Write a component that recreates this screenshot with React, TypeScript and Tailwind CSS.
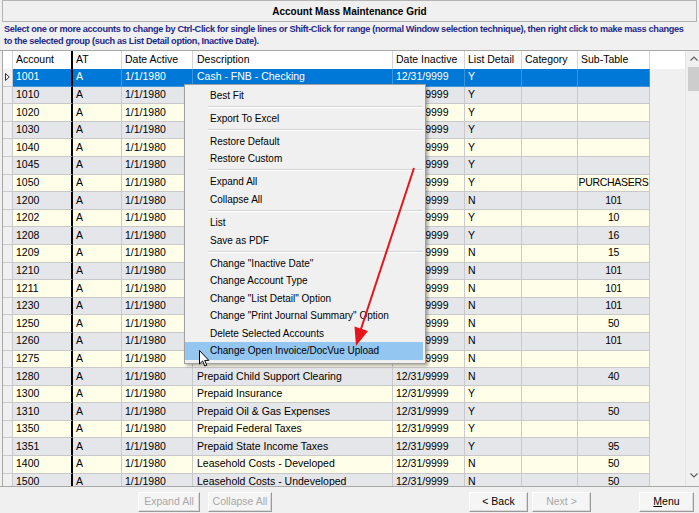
import React from "react";

type Row = [string, string, string, string, string, string, string, string];

const rows: Row[] = [
  ["1001", "A", "1/1/1980", "Cash - FNB - Checking", "12/31/9999", "Y", "", ""],
  ["1010", "A", "1/1/1980", "Cash - Payroll", "12/31/9999", "Y", "", ""],
  ["1020", "A", "1/1/1980", "Cash - Money Market", "12/31/9999", "Y", "", ""],
  ["1030", "A", "1/1/1980", "Petty Cash", "12/31/9999", "Y", "", ""],
  ["1040", "A", "1/1/1980", "Cash - Savings", "12/31/9999", "Y", "", ""],
  ["1045", "A", "1/1/1980", "Cash - Distribution", "12/31/9999", "Y", "", ""],
  ["1050", "A", "1/1/1980", "Accounts Receivable - Trade", "12/31/9999", "Y", "", "PURCHASERS"],
  ["1200", "A", "1/1/1980", "A/R - Joint Interest Billing", "12/31/9999", "N", "", "101"],
  ["1202", "A", "1/1/1980", "A/R - Employees", "12/31/9999", "Y", "", "10"],
  ["1208", "A", "1/1/1980", "A/R - Other", "12/31/9999", "Y", "", "16"],
  ["1209", "A", "1/1/1980", "Notes Receivable", "12/31/9999", "N", "", "15"],
  ["1210", "A", "1/1/1980", "Accrued Interest Receivable", "12/31/9999", "N", "", "101"],
  ["1211", "A", "1/1/1980", "Allowance for Doubtful Accts", "12/31/9999", "N", "", "101"],
  ["1230", "A", "1/1/1980", "Inventory - Equipment", "12/31/9999", "N", "", "101"],
  ["1250", "A", "1/1/1980", "Inventory - Materials", "12/31/9999", "N", "", "50"],
  ["1260", "A", "1/1/1980", "Prepaid Expenses", "12/31/9999", "N", "", "101"],
  ["1275", "A", "1/1/1980", "Prepaid Workers Comp", "12/31/9999", "N", "", ""],
  ["1280", "A", "1/1/1980", "Prepaid Child Support Clearing", "12/31/9999", "N", "", "40"],
  ["1300", "A", "1/1/1980", "Prepaid Insurance", "12/31/9999", "Y", "", ""],
  ["1310", "A", "1/1/1980", "Prepaid Oil & Gas Expenses", "12/31/9999", "Y", "", "50"],
  ["1350", "A", "1/1/1980", "Prepaid Federal Taxes", "12/31/9999", "Y", "", ""],
  ["1351", "A", "1/1/1980", "Prepaid State Income Taxes", "12/31/9999", "Y", "", "95"],
  ["1400", "A", "1/1/1980", "Leasehold Costs - Developed", "12/31/9999", "N", "", "50"],
  ["1500", "A", "1/1/1980", "Leasehold Costs - Undeveloped", "12/31/9999", "N", "", "50"],
];

const headers = ["Account", "AT", "Date Active", "Description", "Date Inactive", "List Detail", "Category", "Sub-Table"];

const widthCls = [
  "w-[60px] border-r-2 border-r-black",
  "w-[49px]",
  "w-[71px]",
  "w-[200px]",
  "w-[72px]",
  "w-[57px]",
  "w-[56px]",
  "w-[72px]",
];

type MenuEntry = { label?: string; sep?: boolean; hi?: boolean };
const menu: MenuEntry[] = [
  { label: "Best Fit" },
  { sep: true },
  { label: "Export To Excel" },
  { sep: true },
  { label: "Restore Default" },
  { label: "Restore Custom" },
  { sep: true },
  { label: "Expand All" },
  { label: "Collapse All" },
  { sep: true },
  { label: "List" },
  { label: "Save as PDF" },
  { sep: true },
  { label: 'Change "Inactive Date"' },
  { label: "Change Account Type" },
  { label: 'Change "List Detail" Option' },
  { label: 'Change "Print Journal Summary" Option' },
  { label: "Delete Selected Accounts" },
  { label: "Change Open Invoice/DocVue Upload", hi: true },
];

function Btn({ label, disabled, cls, underlineFirst }: { label: string; disabled?: boolean; cls: string; underlineFirst?: boolean }) {
  return (
    <div
      className={`${cls} h-[20px] shrink-0 flex items-center justify-center bg-[#f5f5f5] border border-t-white border-l-white border-r-[#9a9a9a] border-b-[#9a9a9a] shadow-[inset_-1px_-1px_0_#dadada] text-[10.5px] ${
        disabled ? "text-[#a8a8a8]" : "text-black"
      }`}
    >
      {underlineFirst ? (
        <span>
          <span className="underline">{label[0]}</span>
          {label.slice(1)}
        </span>
      ) : (
        label
      )}
    </div>
  );
}

export default function App() {
  return (
    <div className="relative w-[699px] h-[513px] overflow-hidden bg-[#f0f0f0] font-['Liberation_Sans',Arial,sans-serif] text-black">
      {/* Title */}
      <div className="h-[22px] mx-[2px] border border-[#b4b4b4] flex items-center justify-center text-[10px] font-bold">
        Account Mass Maintenance Grid
      </div>
      {/* Instructions */}
      <div className="h-[28px] pl-[4px] pt-[1px] text-[9.2px] tracking-[-0.34px] font-bold text-[#1f2a8c] leading-[12px]">
        <div className="whitespace-nowrap">
          Select one or more accounts to change by Ctrl-Click for single lines or Shift-Click for range (normal Window selection technique), then right click to make mass changes
        </div>
        <div className="whitespace-nowrap">to the selected group (such as List Detail option, Inactive Date).</div>
      </div>

      {/* Grid area */}
      <div className="flex h-[436px] border-t border-[#a8a8a8] overflow-hidden">
        <div className="ml-[2px] w-[683px] shrink-0 border-l border-[#a8a8a8] overflow-hidden text-[10.5px]">
          {/* header */}
          <div className="flex h-[18px] bg-white">
            <div className="w-[10px] shrink-0 border-r border-[#d4d4d4]" />
            {headers.map((h, i) => (
              <div
                key={h}
                className={`${widthCls[i]} shrink-0 h-full flex items-center border-r border-[#d4d4d4] ${i === 0 ? "border-r-2 border-r-black" : ""} ${i === 3 ? "pl-[4px]" : "pl-[3px]"}`}
              >
                {h}
              </div>
            ))}
          </div>
          {/* rows */}
          {rows.map((r, ri) => {
            const sel = ri === 0;
            const bg = sel ? "bg-[#0078d7] text-white" : ri % 2 === 1 ? "bg-[#e5e6ea]" : "bg-[#fffee8]";
            const bc = sel ? "border-[#3d94dc]" : "border-[#c9c9cc]";
            return (
              <div key={r[0]} className="flex h-[17.6px]">
                <div className="w-[10px] shrink-0 bg-[#f0f0f0] border-r border-b border-[#c9c9cc] flex items-center pl-[2px]">
                  {sel && (
                    <svg width="5" height="8" viewBox="0 0 5 8">
                      <polygon points="0.5,0.5 4.2,4 0.5,7.5" fill="white" stroke="#333" strokeWidth="1" />
                    </svg>
                  )}
                </div>
                {r.map((c, ci) => (
                  <div
                    key={ci}
                    className={`${widthCls[ci]} shrink-0 h-full flex items-center border-r border-b ${bc} ${bg} ${ci === 0 ? "border-r-2 border-r-black" : ""} ${
                      ci === 7 ? "justify-center tracking-[-0.3px]" : ci === 3 ? "pl-[4px]" : "pl-[3px]"
                    } whitespace-nowrap overflow-hidden`}
                  >
                    {c}
                  </div>
                ))}
              </div>
            );
          })}
        </div>
        {/* scrollbar */}
        <div className="w-[17px] shrink-0 border-l border-[#e4e4e4] bg-[#f0f0f0] flex flex-col items-stretch">
          <div className="h-[15px] flex items-center justify-center">
            <svg width="8" height="5" viewBox="0 0 8 5">
              <polyline points="0.5,4.5 4,1 7.5,4.5" fill="none" stroke="#606060" strokeWidth="1.2" />
            </svg>
          </div>
          <div className="mx-[2px] mt-[1px] h-[24px] bg-[#cdcdcd]" />
          <div className="flex-1" />
          <div className="h-[22px] flex items-center justify-center">
            <svg width="8" height="5" viewBox="0 0 8 5">
              <polyline points="0.5,0.5 4,4 7.5,0.5" fill="none" stroke="#606060" strokeWidth="1.2" />
            </svg>
          </div>
        </div>
      </div>

      {/* Bottom bar */}
      <div className="h-[27px] border-t border-[#a8a8a8] flex items-start pt-[5px]">
        <Btn label="Expand All" disabled cls="ml-[138px] w-[62px]" />
        <Btn label="Collapse All" disabled cls="ml-[8px] w-[64px]" />
        <Btn label="< Back" cls="ml-[197px] w-[59px]" />
        <Btn label="Next >" disabled cls="ml-[4px] w-[59px]" />
        <Btn label="Menu" cls="ml-[48px] w-[55px]" underlineFirst />
      </div>

      {/* Context menu */}
      <div className="absolute left-[184px] top-[84px] w-[242px] bg-[#f0f0f0] border border-[#a0a0a0] pt-[1.5px] pb-[3px] shadow-[2px_2px_3px_rgba(0,0,0,0.3)] text-[10px]">
        {menu.map((m, i) =>
          m.sep ? (
            <div key={i} className="h-[5.4px] ml-[23px] mr-[2px] flex flex-col justify-center">
              <div className="h-px bg-[#d4d4d4]" />
              <div className="h-px bg-white" />
            </div>
          ) : (
            <div
              key={i}
              className={`h-[17.6px] mr-[2px] flex items-center pl-[25px] whitespace-nowrap ${m.hi ? "bg-[#93c6f0]" : ""}`}
            >
              {m.label}
            </div>
          )
        )}
      </div>

      {/* Red arrow */}
      <svg className="absolute left-0 top-0 pointer-events-none" width="699" height="513" viewBox="0 0 699 513">
        <line x1="414" y1="168" x2="360" y2="332" stroke="#e8141c" strokeWidth="2" />
        <polygon points="356,346 354.5,326.5 368,331" fill="#e8141c" />
      </svg>

      {/* Mouse cursor */}
      <svg className="absolute left-[199px] top-[350px] pointer-events-none" width="12" height="18" viewBox="0 0 12 18">
        <path d="M0.5,0.5 L0.5,14 L3.6,11 L5.8,16 L7.8,15.2 L5.7,10.4 L9.8,10.4 Z" fill="white" stroke="black" strokeWidth="1" strokeLinejoin="miter" />
      </svg>
    </div>
  );
}
